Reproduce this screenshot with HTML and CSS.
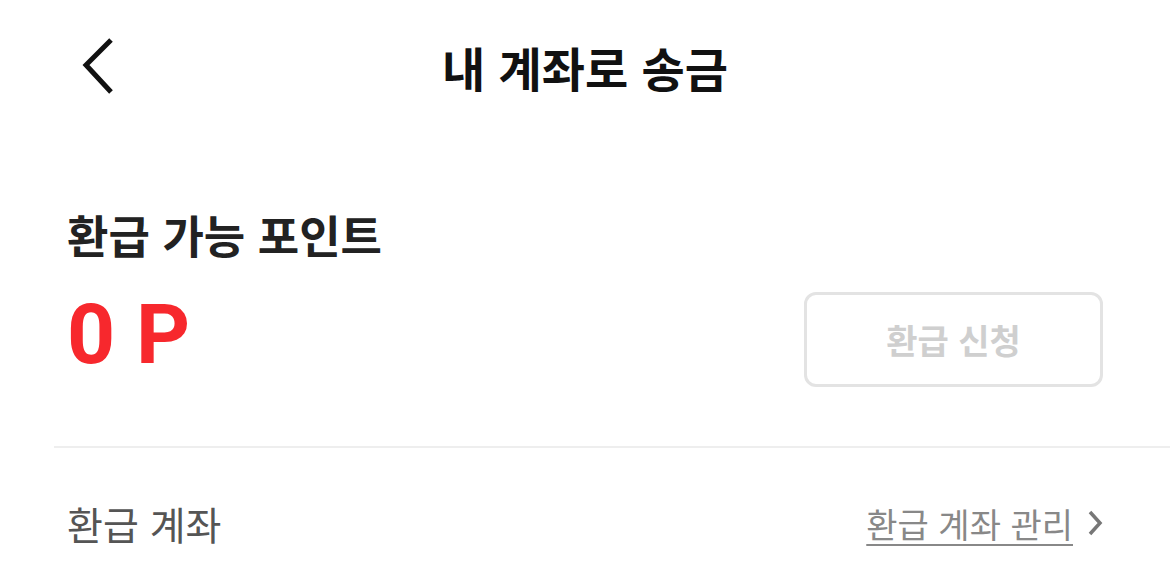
FILE: index.html
```html
<!DOCTYPE html>
<html lang="ko">
<head>
  <meta charset="UTF-8">
  <meta name="viewport" content="width=device-width, initial-scale=1.0">
  <title>내 계좌로 송금</title>
  <link rel="stylesheet" href="styles.css">
</head>
<body>
  <header class="topbar">
    <button class="back-button" aria-label="뒤로">
      <svg width="40" height="60" viewBox="0 0 40 60">
        <polyline points="30,4 5,29 30,56" fill="none" stroke="#111" stroke-width="5"/>
      </svg>
    </button>
    <h1>내 계좌로 송금</h1>
  </header>

  <section class="points">
    <div class="points-label">환급 가능 포인트</div>
    <div class="points-row">
      <div class="points-value">0 P</div>
      <button class="refund-button" disabled>환급 신청</button>
    </div>
  </section>

  <div class="divider"></div>

  <section class="account">
    <div class="account-label">환급 계좌</div>
    <a class="account-link" href="#">
      <span>환급 계좌 관리</span>
      <svg width="16" height="28" viewBox="0 0 16 28">
        <polyline points="3,3 13,14 3,25" fill="none" stroke="#777" stroke-width="3.5"/>
      </svg>
    </a>
  </section>
</body>
</html>
```

FILE: styles.css
```css
body {
  margin: 0;
  background: #fff;
  color: #222;
  font-family: "Noto Sans CJK KR", "Noto Sans", sans-serif;
}
.topbar {
  position: relative;
  height: 132px;
  display: flex;
  align-items: center;
  justify-content: center;
}
.topbar h1 {
  margin: 0;
  font-size: 47px;
  font-weight: 700;
  color: #111;
}
.back-button {
  position: absolute;
  left: 81px;
  top: 36px;
  padding: 0;
  border: none;
  background: none;
  width: 40px;
  height: 60px;
}
.points {
  padding: 73px 67px 0 67px;
}
.points-label {
  font-size: 45px;
  font-weight: 700;
  line-height: 60px;
  color: #222;
}
.points-row {
  display: flex;
  justify-content: space-between;
  align-items: center;
  margin-top: 27px;
}
.points-value {
  font-family: Roboto, sans-serif;
  font-size: 84px;
  font-weight: 700;
  color: #f7282d;
  line-height: 80px;
  padding-bottom: 9px;
}
.refund-button {
  width: 299px;
  height: 95px;
  border: 3px solid #e3e3e3;
  border-radius: 12px;
  background: #fff;
  color: #cfcfcf;
  font-family: "Noto Sans CJK KR", sans-serif;
  font-size: 34px;
  font-weight: 700;
}
.divider {
  margin: 59px 0 0 54px;
  height: 2px;
  background: #eeeeee;
}
.account {
  display: flex;
  justify-content: space-between;
  align-items: center;
  padding: 47px 67px 0 67px;
}
.account-label {
  font-size: 39px;
  color: #555;
}
.account-link {
  display: flex;
  align-items: center;
  gap: 14px;
  color: #888;
  font-size: 34px;
  text-decoration: none;
}
.account-link span {
  text-decoration: underline;
  text-underline-offset: 6px;
  text-decoration-thickness: 2px;
}
```
